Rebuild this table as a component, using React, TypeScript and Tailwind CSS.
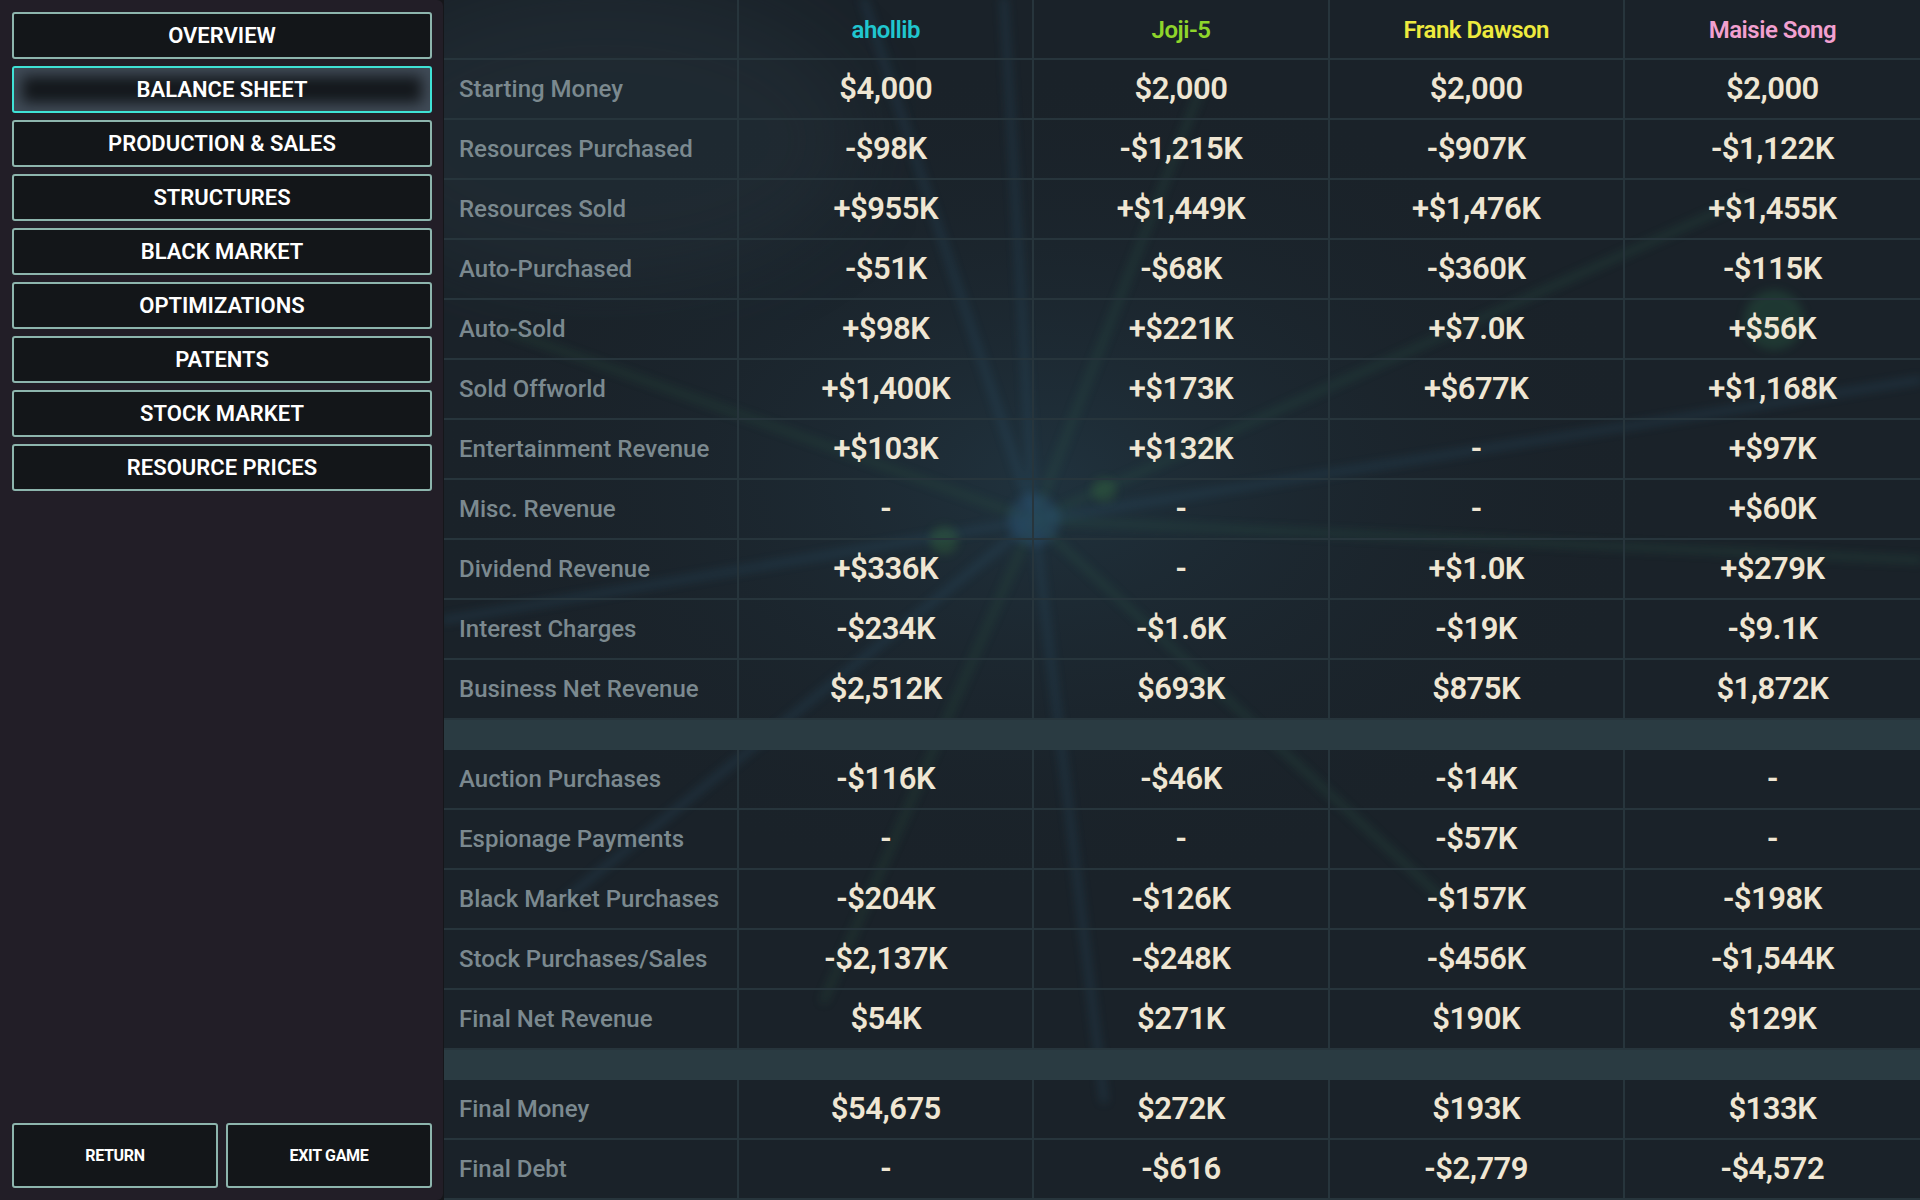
import React from "react";

const players = [
  { name: "ahollib", color: "text-[#20c6cf]" },
  { name: "Joji-5", color: "text-[#8fd52b]" },
  { name: "Frank Dawson", color: "text-[#eeea3e]" },
  { name: "Maisie Song", color: "text-[#f2a0d0]" },
];

type Row = [string, string, string, string, string];

const block1: Row[] = [
  ["Starting Money", "$4,000", "$2,000", "$2,000", "$2,000"],
  ["Resources Purchased", "-$98K", "-$1,215K", "-$907K", "-$1,122K"],
  ["Resources Sold", "+$955K", "+$1,449K", "+$1,476K", "+$1,455K"],
  ["Auto-Purchased", "-$51K", "-$68K", "-$360K", "-$115K"],
  ["Auto-Sold", "+$98K", "+$221K", "+$7.0K", "+$56K"],
  ["Sold Offworld", "+$1,400K", "+$173K", "+$677K", "+$1,168K"],
  ["Entertainment Revenue", "+$103K", "+$132K", "-", "+$97K"],
  ["Misc. Revenue", "-", "-", "-", "+$60K"],
  ["Dividend Revenue", "+$336K", "-", "+$1.0K", "+$279K"],
  ["Interest Charges", "-$234K", "-$1.6K", "-$19K", "-$9.1K"],
  ["Business Net Revenue", "$2,512K", "$693K", "$875K", "$1,872K"],
];

const block2: Row[] = [
  ["Auction Purchases", "-$116K", "-$46K", "-$14K", "-"],
  ["Espionage Payments", "-", "-", "-$57K", "-"],
  ["Black Market Purchases", "-$204K", "-$126K", "-$157K", "-$198K"],
  ["Stock Purchases/Sales", "-$2,137K", "-$248K", "-$456K", "-$1,544K"],
  ["Final Net Revenue", "$54K", "$271K", "$190K", "$129K"],
];

const block3: Row[] = [
  ["Final Money", "$54,675", "$272K", "$193K", "$133K"],
  ["Final Debt", "-", "-$616", "-$2,779", "-$4,572"],
];

const navItems = [
  "OVERVIEW",
  "BALANCE SHEET",
  "PRODUCTION & SALES",
  "STRUCTURES",
  "BLACK MARKET",
  "OPTIMIZATIONS",
  "PATENTS",
  "STOCK MARKET",
  "RESOURCE PRICES",
];

function DataRow({ row }: { row: Row }) {
  return (
    <div className="grid grid-cols-5 h-[60px] border-b-2 border-[#27353c]">
      <div className="flex items-center pl-[15px] text-[24px] font-medium text-[#7b898f] border-r-2 border-[#27353c]">
        {row[0]}
      </div>
      {row.slice(1).map((v, i) => (
        <div
          key={i}
          className={`flex items-center justify-center text-[31px] font-semibold text-[#efe6d3] tracking-[-0.5px] ${
            i < 3 ? "border-r-2 border-[#27353c]" : ""
          }`}
        >
          {v}
        </div>
      ))}
    </div>
  );
}

function Band() {
  return <div className="h-[30px] bg-[#2a3b42]" />;
}

const rays: [number, number, string][] = [
  [420, 0, "#2a5570"],
  [560, 0, "#2a5570"],
  [760, 80, "#2a5a48"],
  [1300, 200, "#2a5a48"],
  [1476, 380, "#2a5570"],
  [1476, 560, "#2a5a48"],
  [60, 330, "#2b5640"],
  [0, 620, "#2a5570"],
  [120, 900, "#2a5570"],
  [380, 1000, "#2b5640"],
  [660, 1100, "#2a5570"],
  [1000, 900, "#2a5a48"],
];

export default function App() {
  return (
    <div className="w-[1920px] h-[1200px] flex bg-[#15161a] font-['Roboto',sans-serif] overflow-hidden">
      {/* Sidebar */}
      <div className="w-[443px] h-full bg-[#221e27] rounded-r-[6px] flex flex-col p-[12px] pr-[11px]">
        <div className="flex flex-col gap-[7px]">
          {navItems.map((item) =>
            item === "BALANCE SHEET" ? (
              <div
                key={item}
                className="h-[47px] rounded-[3px] border-2 border-[#3fe2d6] bg-[#14181c] shadow-[inset_0_0_14px_8px_#414c58] flex items-center justify-center text-white text-[22px] font-semibold"
              >
                {item}
              </div>
            ) : (
              <div
                key={item}
                className="h-[47px] rounded-[3px] border-2 border-[#8db5ad] bg-[#131619] flex items-center justify-center text-white text-[22px] font-semibold"
              >
                {item}
              </div>
            )
          )}
        </div>
        <div className="mt-auto flex gap-[8px]">
          <div className="flex-1 h-[65px] rounded-[3px] border-2 border-[#8db5ad] bg-[#131619] flex items-center justify-center text-white text-[16px] font-bold tracking-[-0.3px]">
            RETURN
          </div>
          <div className="flex-1 h-[65px] rounded-[3px] border-2 border-[#8db5ad] bg-[#131619] flex items-center justify-center text-white text-[16px] font-bold tracking-[-0.3px]">
            EXIT GAME
          </div>
        </div>
      </div>

      {/* Table area */}
      <div className="relative flex-1 h-full ml-[1px] bg-[#1a2229] overflow-hidden">
        <svg
          className="absolute inset-0 w-full h-full"
          viewBox="0 0 1476 1200"
          preserveAspectRatio="none"
        >
          <defs>
            <filter id="blurA">
              <feGaussianBlur stdDeviation="5" />
            </filter>
            <filter id="blurB">
              <feGaussianBlur stdDeviation="40" />
            </filter>
            <radialGradient id="glow" cx="0.5" cy="0.5" r="0.5">
              <stop offset="0%" stopColor="#264252" stopOpacity="0.5" />
              <stop offset="100%" stopColor="#1a2229" stopOpacity="0" />
            </radialGradient>
          </defs>
          <ellipse cx="600" cy="480" rx="620" ry="420" fill="url(#glow)" />
          <ellipse cx="160" cy="140" rx="260" ry="150" fill="#2a3a44" opacity="0.3" filter="url(#blurB)" />
          <g filter="url(#blurA)" strokeLinecap="round" fill="none" opacity="0.35">
            {rays.map(([x, y, c], i) => (
              <line key={i} x1="590" y1="520" x2={x} y2={y} stroke={c} strokeWidth="6" />
            ))}
          </g>
          <g filter="url(#blurA)" opacity="0.3">
            <circle cx="590" cy="520" r="26" fill="#2e5f8a" />
            <circle cx="500" cy="540" r="14" fill="#3a7a3e" />
            <circle cx="660" cy="490" r="12" fill="#3a7a3e" />
            <circle cx="1330" cy="320" r="30" fill="#2c6a4a" />
          </g>
        </svg>

        <div className="relative flex flex-col">
          {/* Header */}
          <div className="grid grid-cols-5 h-[60px] border-b-2 border-[#27353c]">
            <div className="border-r-2 border-[#27353c]" />
            {players.map((p, i) => (
              <div
                key={p.name}
                className={`flex items-center justify-center pt-[2px] text-[24px] font-semibold tracking-[-0.5px] ${p.color} ${
                  i < 3 ? "border-r-2 border-[#27353c]" : ""
                }`}
              >
                {p.name}
              </div>
            ))}
          </div>
          {block1.map((r) => (
            <DataRow key={r[0]} row={r} />
          ))}
          <Band />
          {block2.map((r) => (
            <DataRow key={r[0]} row={r} />
          ))}
          <Band />
          {block3.map((r) => (
            <DataRow key={r[0]} row={r} />
          ))}
        </div>
      </div>
    </div>
  );
}
